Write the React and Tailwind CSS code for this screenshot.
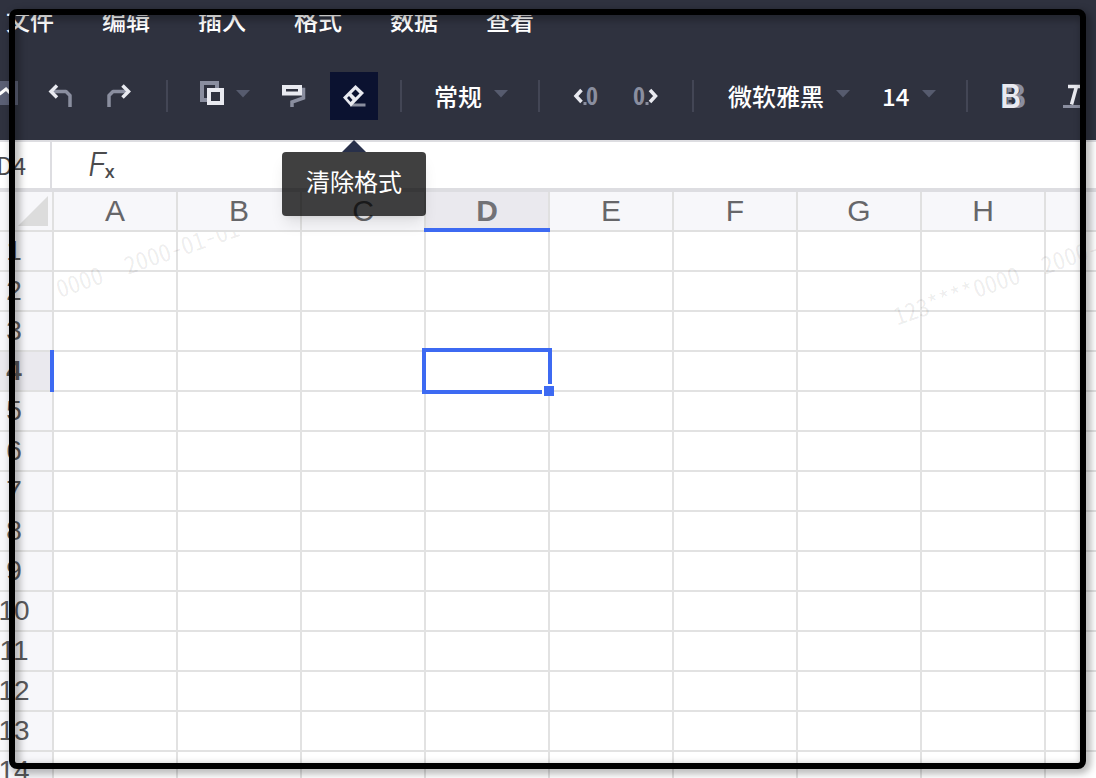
import React from "react";

const MENUS = ["文件", "编辑", "插入", "格式", "数据", "查看"];
const COLUMNS = ["A", "B", "C", "D", "E", "F", "G", "H", "I"];
const ROWS = Array.from({ length: 14 }, (_, i) => i + 1);
const ACTIVE = { column: "D", row: 4 };
const LIGHT = "#e9eaf0";
const DIM = "#8a8e9f";
const MONO = "'Noto Sans Mono CJK SC', 'Noto Sans CJK SC', monospace";

function Divider() {
  return <span className="mx-[22px] h-8 w-0.5 shrink-0 bg-[#434655]" />;
}

function Caret() {
  return (
    <svg className="pointer-events-none -mt-1 h-2 w-3.5 shrink-0" viewBox="0 0 14 8" aria-hidden="true">
      <path d="M0 0h14L7 7.5z" fill="#565b6e" />
    </svg>
  );
}

function ToolButton({ label, active, children }) {
  return (
    <button
      type="button"
      aria-label={label}
      className={
        active
          ? "flex size-12 shrink-0 items-center justify-center bg-[#0b1230]"
          : "flex size-12 shrink-0 items-center justify-center"
      }
    >
      {children}
    </button>
  );
}

function Icon({ children }) {
  return (
    <svg className="size-6 overflow-visible" viewBox="0 0 24 24" fill="none" aria-hidden="true">
      {children}
    </svg>
  );
}

function Toolbar() {
  return (
    <div className="flex items-center pt-8 pb-5">
      <ToolButton label="图表">
        <svg className="-mt-1.5 h-6 w-9 shrink-0" viewBox="0 0 36 24" fill="none" aria-hidden="true">
          <path d="M0 0h36v24H0z" fill="#5b6075" />
          <path d="M12 17l7-5 5-4 5 5" stroke="#fff" strokeWidth="3" />
        </svg>
      </ToolButton>
      <div className="ml-3 flex gap-3">
        <ToolButton label="撤销">
          <Icon>
            <path d="M5 7.500H18l4 4V23" stroke={DIM} strokeWidth="3.5" strokeLinejoin="round" />
            <path d="M9 1.500 3 7.500l6 6" stroke={LIGHT} strokeWidth="3.5" />
          </Icon>
        </ToolButton>
        <ToolButton label="重做">
          <Icon>
            <path d="M18 7.500H5l-4 4V23" stroke={DIM} strokeWidth="3.5" strokeLinejoin="round" />
            <path d="m14.500 1.500 6 6-6 6" stroke={LIGHT} strokeWidth="3.5" />
          </Icon>
        </ToolButton>
      </div>
      <Divider />
      <button type="button" aria-label="边框" className="mr-3 flex h-12 shrink-0 items-center gap-3 pr-2 pl-2.5">
        <svg className="-mt-1.5 size-6" viewBox="0 0 24 24" fill="none" aria-hidden="true">
          <path d="M2 2h15v17H2z" stroke={DIM} strokeWidth="4" />
          <path d="M9 9h13v13H9z" fill="#2f323f" stroke={LIGHT} strokeWidth="4" />
        </svg>
        <Caret />
      </button>
      <ToolButton label="格式刷">
        <Icon>
          <path d="M18 5.500h3.500V14L10 18v5" stroke={DIM} strokeWidth="3.5" />
          <path d="M2 3h16v6.500H2z" fill="#2f323f" stroke={LIGHT} strokeWidth="4" />
        </Icon>
      </ToolButton>
      <div className="relative ml-3 shrink-0">
        <ToolButton label="清除格式" active>
          <Icon>
            <path d="M8 21h15.500" stroke={DIM} strokeWidth="3" />
            <path d="M13.500 1 22 9 9 22.500 1 13.500z" fill={LIGHT} />
            <path d="M13.500 5.500 17.500 9.500 13.500 13.500 9.500 9.500z" fill="#0b1230" />
            <path d="m7 12 3.500 4-2 2-3.500-4z" fill="#0b1230" />
          </Icon>
        </ToolButton>
        <div role="tooltip" className="absolute top-full left-1/2 z-20 -translate-x-1/2 pt-8">
          <svg className="absolute top-5 left-1/2 h-3 w-6 -translate-x-1/2" viewBox="0 0 24 12" aria-hidden="true">
            <path d="M0 12 12 0l12 12z" fill="#28304a" />
          </svg>
          <div className="flex h-16 items-center rounded bg-black/75 px-6 pb-1.5 whitespace-nowrap text-white shadow-lg">
            清除格式
          </div>
        </div>
      </div>
      <Divider />
      <label className="flex h-12 shrink-0 items-center gap-3 pr-2 pl-2.5">
        <select aria-label="数字格式" className="w-12 appearance-none bg-transparent font-medium text-white outline-none">
          <option>常规</option>
        </select>
        <Caret />
      </label>
      <Divider />
      <div className="flex gap-3">
        <ToolButton label="减少小数位">
          <Icon>
            <text x="12" y="21" fontSize="24" fontWeight="700" fontFamily={MONO} fill={DIM}>
              0
            </text>
            <path d="M9.500 18h3v3h-3z" fill={DIM} />
            <path d="M7.500 6 2 12l5.500 6" stroke={LIGHT} strokeWidth="3.5" />
          </Icon>
        </ToolButton>
        <ToolButton label="增加小数位">
          <Icon>
            <text x="-1" y="21" fontSize="24" fontWeight="700" fontFamily={MONO} fill={DIM}>
              0
            </text>
            <path d="M11.500 18h3v3h-3z" fill={DIM} />
            <path d="m16 6 5.500 6-5.500 6" stroke={LIGHT} strokeWidth="3.5" />
          </Icon>
        </ToolButton>
      </div>
      <Divider />
      <label className="mr-3 flex h-12 shrink-0 items-center gap-3 pr-2 pl-3">
        <select aria-label="字体" className="w-24 appearance-none bg-transparent font-medium text-white outline-none">
          <option>微软雅黑</option>
        </select>
        <Caret />
      </label>
      <label className="flex h-12 shrink-0 items-center gap-3 pr-2 pl-3">
        <select aria-label="字号" className="w-7 appearance-none bg-transparent font-medium text-white outline-none">
          <option>14</option>
        </select>
        <Caret />
      </label>
      <Divider />
      <div className="flex gap-3">
        <ToolButton label="加粗">
          <Icon>
            <text x="3" y="24" fontSize="32" fontWeight="600" fontFamily="Inter, sans-serif" fill={DIM}>
              B
            </text>
            <text x="-2" y="24" fontSize="32" fontWeight="600" fontFamily="Inter, sans-serif" fill={LIGHT}>
              B
            </text>
            <path d="M6.500 8h5v2h-5zM6.500 16h5v2.500h-5z" fill="#2f323f" />
          </Icon>
        </ToolButton>
        <ToolButton label="斜体">
          <Icon>
            <path d="M1 22.500h22" stroke={DIM} strokeWidth="3" />
            <path d="M6 2.500h16M14.500 2.500l-5 18" stroke={LIGHT} strokeWidth="3.5" />
          </Icon>
        </ToolButton>
      </div>
    </div>
  );
}

function FormulaBar() {
  return (
    <div className="flex h-[52px] border-t-2 border-b-4 border-[#dddde1] bg-white text-[#4b4b4d]">
      <input
        aria-label="名称框"
        defaultValue="D4"
        className="w-[76px] shrink-0 border-r-2 border-[#dddde1] pr-6 text-right outline-none"
      />
      <label htmlFor="formula" className="flex shrink-0 items-center pl-9 font-['Inter'] text-[32px] leading-none font-light italic">
        F<span className="-ml-0.5 mt-3 font-['Open_Sans'] text-lg leading-none font-semibold not-italic">x</span>
      </label>
      <input id="formula" className="min-w-0 flex-1 px-6 outline-none" />
    </div>
  );
}

function Selection() {
  return (
    <div className="absolute -inset-1 border-4 border-[#3d6af2]">
      <span className="absolute -right-1.5 -bottom-1.5 size-3 border-t-2 border-l-2 border-white bg-[#3d6af2]" />
    </div>
  );
}

function Watermark() {
  return (
    <div
      className="pointer-events-none absolute top-10 right-0 bottom-0 left-[78px] overflow-hidden font-['Noto_Sans_Mono_CJK_SC','Noto_Sans_CJK_SC',monospace] text-2xl leading-6 font-medium whitespace-pre text-black/8"
      aria-hidden="true"
    >
      <span className="absolute top-[72px] -left-[77px] origin-left -rotate-19">123****0000  2000-01-01</span>
      <span className="absolute top-[72px] left-[840px] origin-left -rotate-19">123****0000  2000-01-01</span>
    </div>
  );
}

function Grid() {
  return (
    <div className="relative">
      <table className="w-[1194px] table-fixed border-separate border-spacing-0 font-['Liberation_Sans'] text-[28px] leading-none text-[#58585a]">
        <thead>
          <tr className="h-10 text-[30px]">
            <th className="w-[78px] border-r-2 border-b-2 border-[#e0e0e0] bg-[#f7f7fa] p-0">
              <svg className="mr-1 ml-auto size-[30px]" viewBox="0 0 30 30" aria-label="全选">
                <path d="M30 0v30H0z" fill="#dcdcdc" />
              </svg>
            </th>
            {COLUMNS.map((name) =>
              name === ACTIVE.column ? (
                <th key={name} scope="col" className="relative border-r-2 border-b-2 border-[#e0e0e0] bg-[#eae9ee] p-0 text-[#727276]">
                  {name}
                  <span className="absolute -inset-x-0.5 -bottom-0.5 z-10 h-1 bg-[#3d6af2]" />
                </th>
              ) : (
                <th key={name} scope="col" className="border-r-2 border-b-2 border-[#e0e0e0] bg-[#f7f7fa] p-0 font-normal text-[#666669]">
                  {name}
                </th>
              )
            )}
          </tr>
        </thead>
        <tbody>
          {ROWS.map((row) => (
            <tr key={row} className="h-10">
              {row === ACTIVE.row ? (
                <th scope="row" className="relative border-r-2 border-b-2 border-[#e0e0e0] bg-[#eae9ee] p-0">
                  {row}
                  <span className="absolute -inset-y-0.5 -right-0.5 z-10 w-1 bg-[#3d6af2]" />
                </th>
              ) : (
                <th scope="row" className="border-r-2 border-b-2 border-[#e0e0e0] bg-[#f7f7fa] p-0 font-normal">
                  {row}
                </th>
              )}
              {COLUMNS.map((name) =>
                row === ACTIVE.row && name === ACTIVE.column ? (
                  <td key={name} className="relative z-10 border-r-2 border-b-2 border-[#e2e2e2] p-0">
                    <Selection />
                  </td>
                ) : (
                  <td key={name} className="border-r-2 border-b-2 border-[#e2e2e2] p-0" />
                )
              )}
            </tr>
          ))}
        </tbody>
      </table>
      <Watermark />
    </div>
  );
}

export default function App() {
  return (
    <div className="relative h-screen overflow-hidden bg-white font-['Noto_Sans_CJK_SC',sans-serif] text-2xl">
      <div className="-ml-6">
        <header className="bg-[#2f323f] text-white">
          <nav className="flex h-10 items-center gap-12 pl-[30px] font-medium">
            {MENUS.map((name) => (
              <button key={name} type="button" className="shrink-0">
                {name}
              </button>
            ))}
          </nav>
          <Toolbar />
        </header>
        <FormulaBar />
        <Grid />
      </div>
      <div className="pointer-events-none absolute top-[9px] right-[10px] bottom-[9px] left-[9px] z-30 rounded-lg border-6 border-black drop-shadow-[3px_3px_4px_rgba(0,0,0,0.45)]" />
    </div>
  );
}
